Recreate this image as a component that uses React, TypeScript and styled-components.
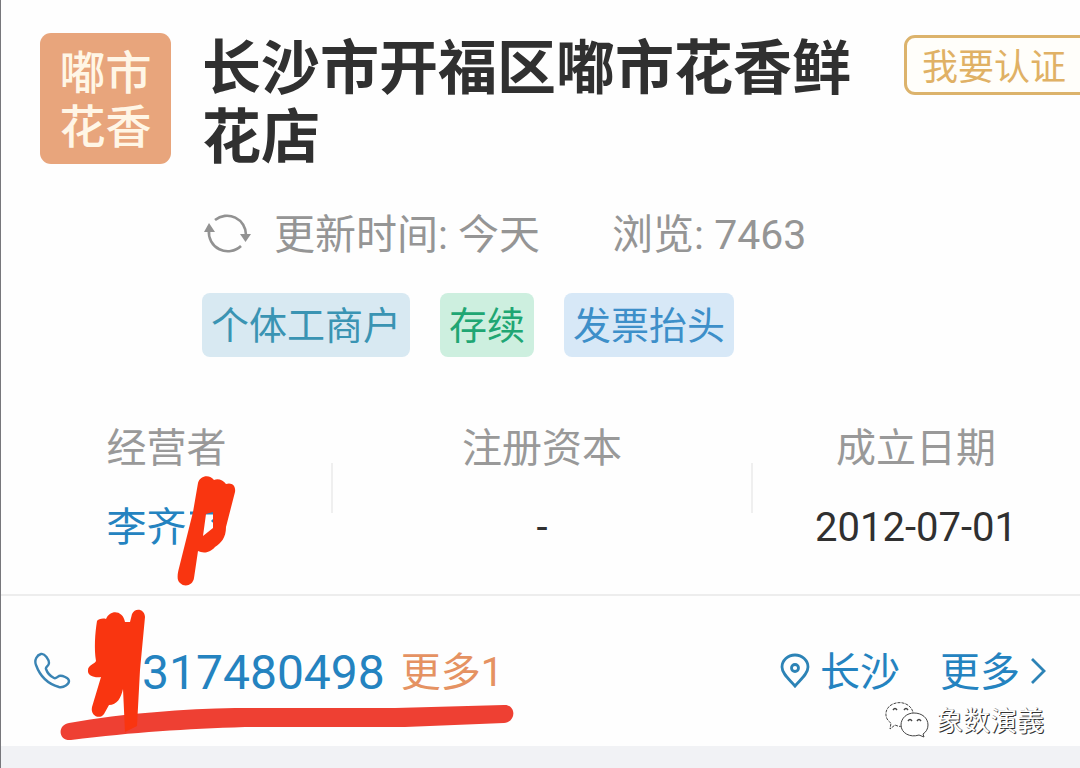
import React from "react";
import styled, { createGlobalStyle } from "styled-components";

const GlobalStyle = createGlobalStyle`
  * { box-sizing: border-box; }
  body {
    margin: 0;
    background: #f1f2f5;
    font-family: Roboto, "Noto Sans CJK SC", sans-serif;
    overflow-x: hidden;
  }
  button { font-family: inherit; cursor: pointer; }
  a { color: inherit; text-decoration: none; }
  h1, dl, dt, dd { margin: 0; }
`;

const Page = styled.main`
  min-height: 100vh;
  border-left: 1px solid #77777b;
  overflow: hidden;
`;

const Card = styled.article`
  background: #fefefe;
`;

const Header = styled.header`
  display: flex;
  align-items: flex-start;
  padding: 33px 0 0 39px;
`;

const Logo = styled.div`
  display: flex;
  align-items: center;
  justify-content: center;
  flex: none;
  width: 131px;
  height: 131px;
  padding-top: 3px;
  border-radius: 11px;
  background: #e8a57c;
  color: #fff6e6;
  font-size: 46px;
  font-weight: 500;
  line-height: 54px;
  text-align: center;
`;

const Summary = styled.div`
  flex: 1;
  min-width: 0;
  margin-left: 31px;
  padding-top: 1px;
`;

const Title = styled.h1`
  max-width: 660px;
  color: #303030;
  font-size: 59px;
  font-weight: 700;
  line-height: 69px;
`;

const Meta = styled.div`
  display: flex;
  align-items: center;
  margin-top: 35px;
  padding-left: 2px;
  color: #959595;
  font-size: 41px;
  line-height: 48px;
  white-space: nowrap;

  & > span { padding-top: 4px; }
`;

const Updated = styled.span`
  margin: 0 72px 0 23px;
`;

const Tags = styled.div`
  display: flex;
  gap: 30px;
  margin-top: 34px;
`;

const Tag = styled.span<{ $ink: string; $fill: string }>`
  padding: 2px 9px 0;
  border-radius: 8px;
  background: ${(p) => p.$fill};
  color: ${(p) => p.$ink};
  font-size: 38px;
  line-height: 62px;
  white-space: nowrap;
`;

const CertifyButton = styled.button`
  flex: none;
  height: 60px;
  margin: 2px -13px 0 0;
  padding: 6px 24px 0 15px;
  border: 3px solid #dcb36c;
  border-radius: 11px;
  background: #fffefa;
  color: #e0b165;
  font-size: 36px;
  line-height: 48px;
`;

const Facts = styled.dl`
  display: grid;
  grid-template-columns: 331fr 420fr 328fr;
  padding: 62px 0 36px;
  border-bottom: 2px solid #ededed;
`;

const Fact = styled.div`
  position: relative;
  display: flex;
  flex-direction: column;
  align-items: center;
  gap: 19px;
  font-size: 40px;
  line-height: 60px;

  & + &::before {
    content: "";
    position: absolute;
    top: 44px;
    left: -1px;
    width: 2px;
    height: 50px;
    background: #efefef;
  }
`;

const Label = styled.dt`
  color: #999;
`;

const Value = styled.dd`
  color: #303030;
`;

const Owner = styled.a`
  position: relative;
  display: flex;
  align-items: center;
  color: #2483c0;
`;

const OwnerScribble = styled.svg`
  position: absolute;
  top: -24px;
  left: 69px;
`;

const Contact = styled.section`
  position: relative;
  display: flex;
  align-items: center;
  height: 150px;
  padding: 0 34px 0 32px;
  color: #2483c0;
  font-size: 40px;
  line-height: 56px;
  white-space: nowrap;
`;

const Phone = styled.a`
  margin-left: 71px;
  padding-top: 4px;
  font-size: 48px;
`;

const MorePhones = styled.button`
  margin-left: 16px;
  padding: 4px 0 0;
  border: 0;
  background: none;
  color: #e59262;
  font-size: 40px;
  line-height: 56px;
`;

const Places = styled.nav`
  display: flex;
  align-items: center;
  gap: 40px;
  margin-left: auto;
`;

const Place = styled.a`
  display: flex;
  align-items: center;
  gap: 10px;

  & > span { padding-top: 4px; }
`;

const ContactScribble = styled.svg`
  position: absolute;
  top: 4px;
  left: 54px;
  pointer-events: none;
`;

const Watermark = styled.div`
  position: absolute;
  right: 36px;
  bottom: 4px;
  display: flex;
  align-items: center;
  gap: 7px;
  color: #fff;
  font-family: "Noto Sans CJK TC", sans-serif;
  font-size: 27px;
  line-height: 44px;
  text-shadow: 1px 1px 0 #333, 1px 0 0 #777;
`;

function RefreshIcon() {
  return (
    <svg width="47" height="42" viewBox="0 0 47 42" fill="none" stroke="#929292" strokeWidth="2.6" aria-hidden="true">
      <path d="M11 8 A19 19 0 0 1 42 23" />
      <path d="M5 18 A19 19 0 0 0 37 34" />
      <path d="M36 22h11l-5.500 8z M0 20l5-9 6 9z" fill="#929292" stroke="none" />
    </svg>
  );
}

function PhoneIcon() {
  return (
    <svg width="38" height="38" viewBox="0 0 38 38" fill="none" stroke="#3a84b4" strokeWidth="2.4" strokeLinejoin="round" aria-hidden="true">
      <path d="M8 2C4 3 1 8 3 13C7 24 15 32 26 35C31 36 36 32 36 29C36 26 29 23 26 24C24 25 23 27 21 26C17 24 14 20 13 17C12 15 16 14 16 11C16 8 12 1 8 2Z" />
    </svg>
  );
}

function PinIcon() {
  return (
    <svg width="30" height="36" viewBox="0 0 30 36" fill="none" stroke="#2c83b6" strokeWidth="2.8" aria-hidden="true">
      <path d="M15 33C10 27 2 21 2 14A13 12 0 0 1 28 14C28 21 20 27 15 33Z" />
      <circle cx="15" cy="15" r="3.5" />
    </svg>
  );
}

function ChevronIcon() {
  return (
    <svg width="16" height="28" viewBox="0 0 16 28" fill="none" stroke="#2c83b6" strokeWidth="2.8" aria-hidden="true">
      <path d="M2 2L14 14L2 26" />
    </svg>
  );
}

function ChatIcon() {
  return (
    <svg width="44" height="38" viewBox="0 0 44 38" fill="#fff" stroke="#444" strokeWidth="1" aria-hidden="true">
      <path d="M17 25C15 26 12 25 10 24L5 28L6 22C-2 17 0 6 8 3C17-1 27 4 28 12" strokeDasharray="3 1" />
      <path d="M29 12C37 12 43 17 43 24C43 28 41 31 38 33L39 36L34 34C25 37 16 32 16 24C16 17 22 12 29 12Z" />
      <path d="M8 9q2-3 4 0M19 9q2-3 4 0M23 20q2-3 4 0M32 20q2-3 4 0" fill="none" strokeWidth="1.4" />
    </svg>
  );
}

export default function App() {
  return (
    <>
      <GlobalStyle />
      <Page>
        <Card>
          <Header>
            <Logo>
              嘟市
              <br />
              花香
            </Logo>
            <Summary>
              <Title>长沙市开福区嘟市花香鲜花店</Title>
              <Meta>
                <RefreshIcon />
                <Updated>更新时间: 今天</Updated>
                <span>浏览: 7463</span>
              </Meta>
              <Tags>
                <Tag $ink="#3a94b3" $fill="#d8e9f2">个体工商户</Tag>
                <Tag $ink="#20a673" $fill="#cdefdf">存续</Tag>
                <Tag $ink="#3d8fc9" $fill="#d7e8f7">发票抬头</Tag>
              </Tags>
            </Summary>
            <CertifyButton type="button">我要认证</CertifyButton>
          </Header>

          <Facts>
            <Fact>
              <Label>经营者</Label>
              <Value>
                <Owner href="#owner">
                  李齐
                  <svg width="40" height="40" viewBox="0 0 40 40" fill="none" stroke="#2483c0" strokeWidth="3" aria-hidden="true">
                    <path d="M3 5H36M25 12L34 20M24 24H34M22 31L34 28" />
                  </svg>
                  <OwnerScribble width="64" height="116" viewBox="0 0 64 116" fill="#f93510" aria-hidden="true">
                    <path
                      fillRule="evenodd"
                      d="M22 9C24 1 34 0 38 6C42 4 47 6 50 10C56 8 60 12 59 18L50 53C50 64 45 69 39 73C33 80 26 79 22 77L18 104C17 111 9 114 4 109C0 106 2 98 3 94L17 38ZM30 40L37 38V54L27 62Z"
                    />
                  </OwnerScribble>
                </Owner>
              </Value>
            </Fact>
            <Fact>
              <Label>注册资本</Label>
              <Value>-</Value>
            </Fact>
            <Fact>
              <Label>成立日期</Label>
              <Value>2012-07-01</Value>
            </Fact>
          </Facts>

          <Contact>
            <PhoneIcon />
            <Phone href="#phone">317480498</Phone>
            <MorePhones type="button">更多1</MorePhones>
            <Places>
              <Place href="#place">
                <PinIcon />
                <span>长沙</span>
              </Place>
              <Place href="#more">
                <span>更多</span>
                <ChevronIcon />
              </Place>
            </Places>
            <ContactScribble width="464" height="146" viewBox="0 0 464 146" aria-hidden="true">
              <path
                fill="#ee4033"
                d="M14 123C70 113 130 109 180 108H340L449 105C461 104 462 122 449 123L350 127H190C130 129 80 132 16 140C3 141 2 125 14 123Z"
              />
              <path
                fill="#f93510"
                d="M42 21C43 19 48 18 51 19C55 9 68 10 70 22H75L77 14C80 7 90 9 90 17L85 70L82 126L70 132L68 89C66 98 62 105 54 105L49 114C45 120 35 116 37 107L46 77C40 78 32 76 33 70C33 65 40 64 41 61C39 49 40 33 42 21Z"
              />
            </ContactScribble>
            <Watermark>
              <ChatIcon />
              象数演義
            </Watermark>
          </Contact>
        </Card>
      </Page>
    </>
  );
}
